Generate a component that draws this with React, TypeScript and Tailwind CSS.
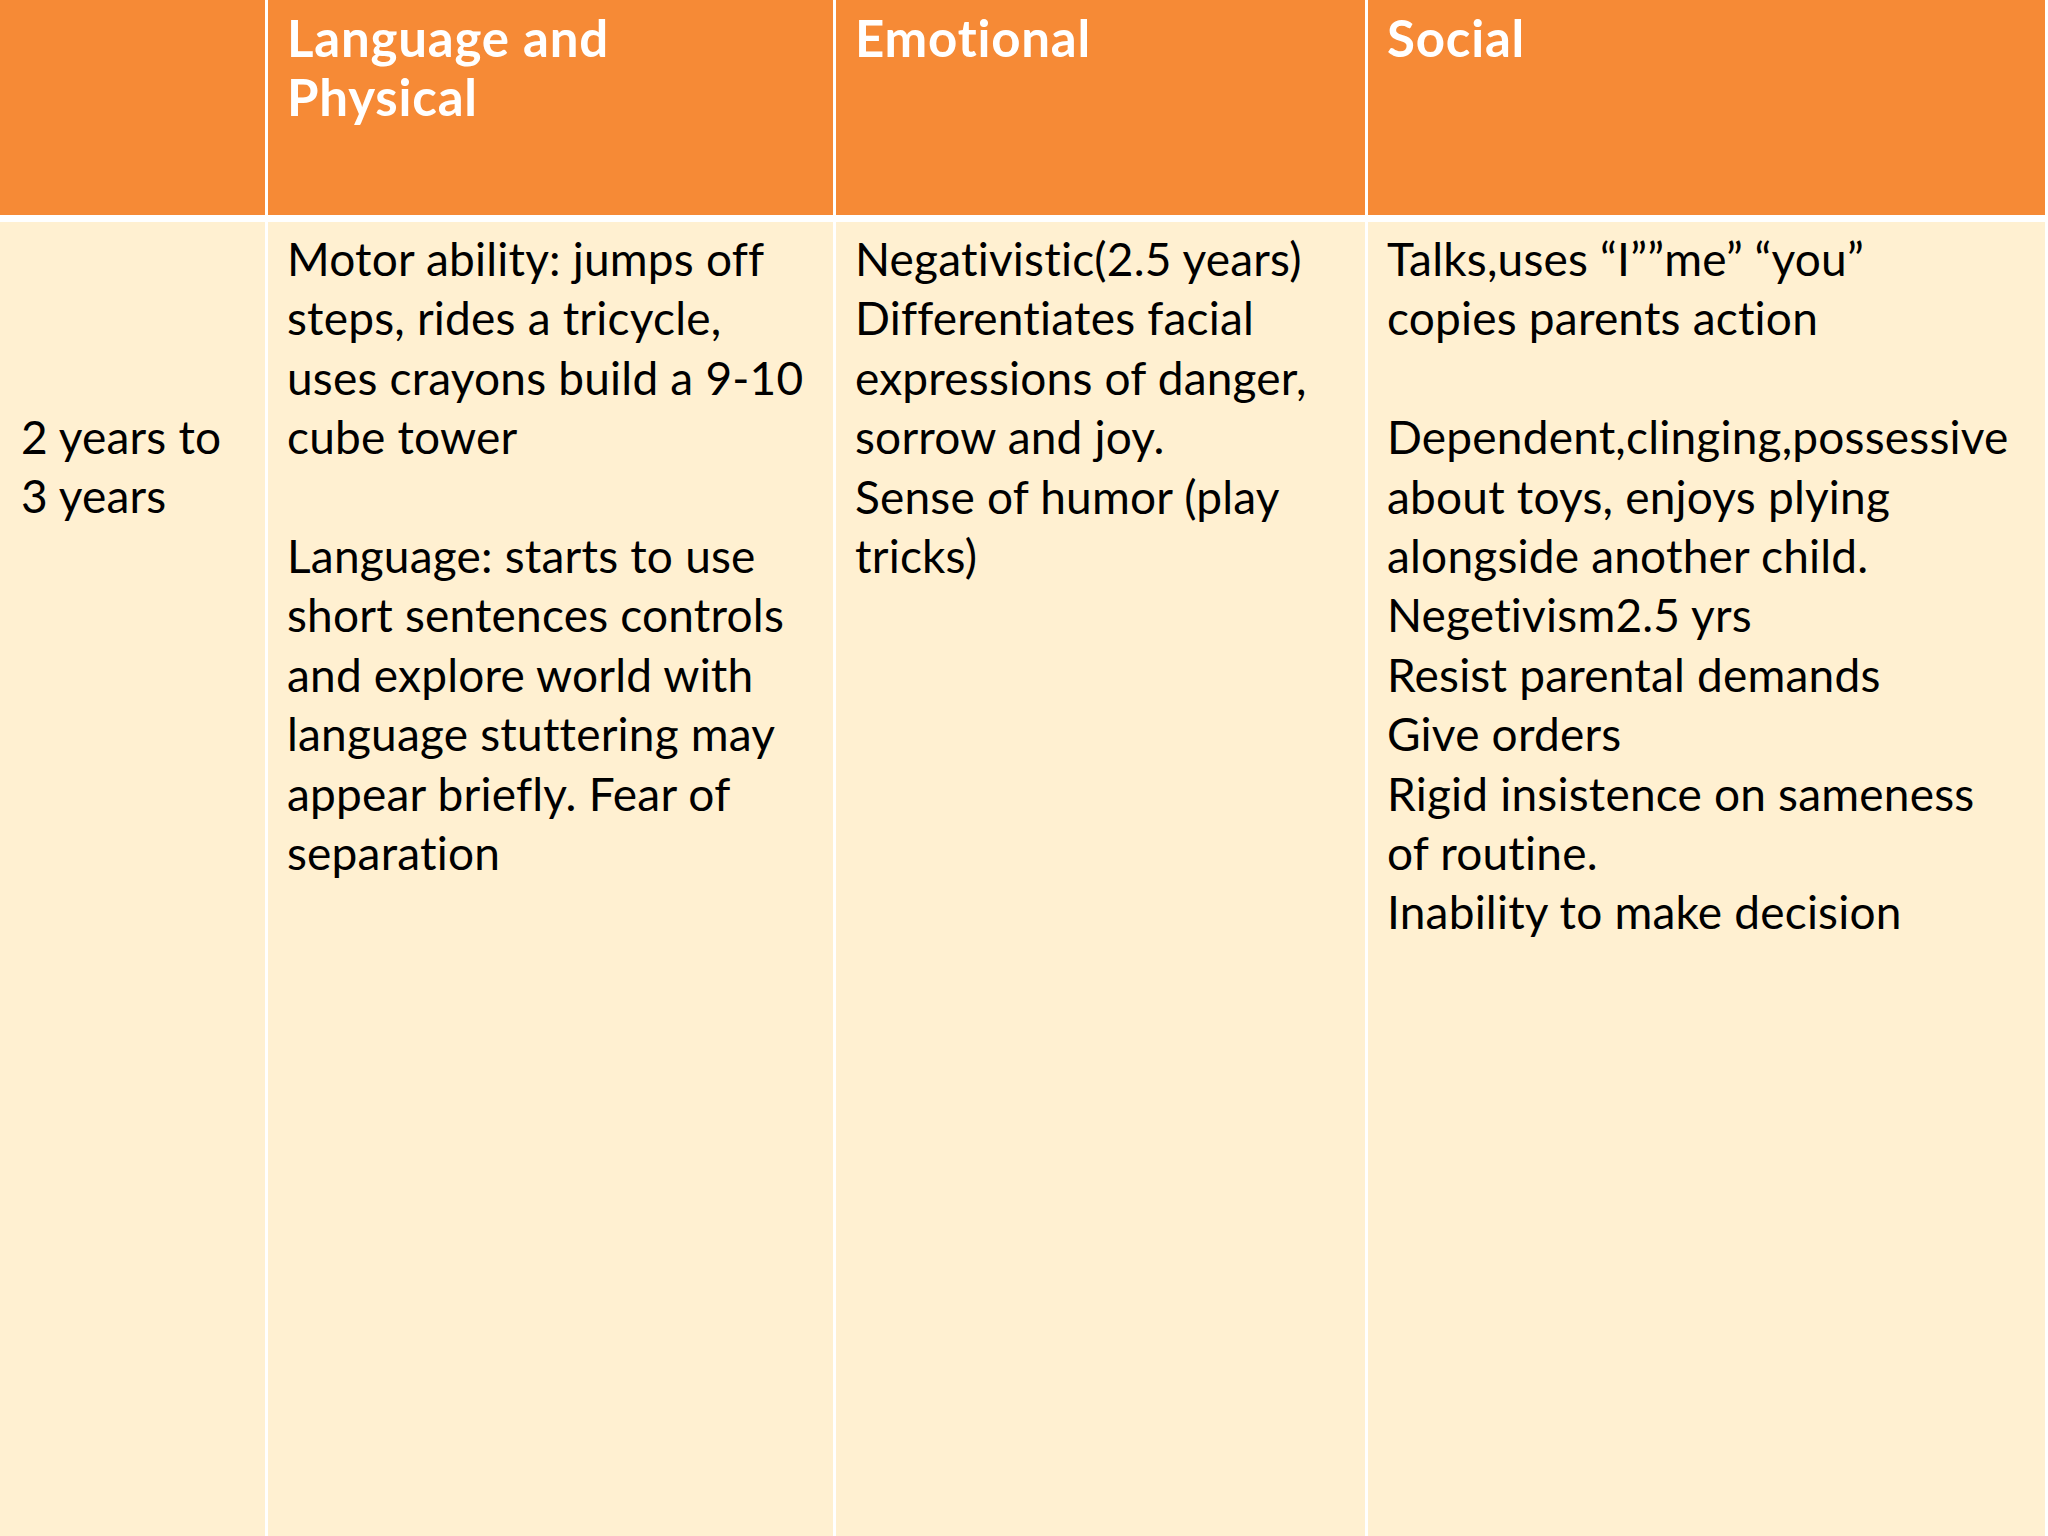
const headers = [[], ['Language and', 'Physical'], ['Emotional'], ['Social']];

// each inner array is a paragraph; '' is an empty line
const body: string[][] = [
  ['2 years to', '3 years'],
  [
    'Motor ability: jumps off',
    'steps, rides a tricycle,',
    'uses crayons build a 9-10',
    'cube tower',
    '',
    'Language: starts to use',
    'short sentences controls',
    'and explore world with',
    'language stuttering may',
    'appear briefly. Fear of',
    'separation',
  ],
  [
    'Negativistic(2.5 years)',
    'Differentiates facial',
    'expressions of danger,',
    'sorrow and joy.',
    'Sense of humor (play',
    'tricks)',
  ],
  [
    'Talks,uses \u201cI\u201d\u201dme\u201d \u201cyou\u201d',
    'copies parents action',
    '',
    'Dependent,clinging,possessive',
    'about toys, enjoys plying',
    'alongside another child.',
    'Negetivism2.5 yrs',
    'Resist parental demands',
    'Give orders',
    'Rigid insistence on sameness',
    'of routine.',
    'Inability to make decision',
  ],
];

function Lines({ lines }: { lines: string[] }) {
  return (
    <>
      {lines.map((l, i) => (
        <div key={i} className="whitespace-nowrap h-[59.4px]">
          {l}
        </div>
      ))}
    </>
  );
}

export default function App() {
  return (
    <div
      className="w-[2048px] h-[1536px] bg-white grid grid-cols-[265px_565px_529px_677px] grid-rows-[215px_1fr] gap-x-[3px] gap-y-[7px] overflow-hidden"
      style={{ fontFamily: 'Lato, "Open Sans", sans-serif' }}
    >
      {headers.map((h, i) => (
        <div
          key={'h' + i}
          className={`bg-[#F68A36] text-white font-bold text-[51px] leading-[60px] tracking-[0.8px] pt-[8px] ${i === 0 ? 'pl-[21px]' : 'pl-[19px]'}`}
        >
          <Lines lines={h} />
        </div>
      ))}
      {body.map((b, i) => (
        <div
          key={'b' + i}
          className={`bg-[#FFF0D1] text-black text-[46px] leading-[59.4px] tracking-[0.2px] ${i === 0 ? 'pl-[21px] pt-[185px]' : 'pl-[19px] pt-[7px]'}`}
        >
          <Lines lines={b} />
        </div>
      ))}
    </div>
  );
}
